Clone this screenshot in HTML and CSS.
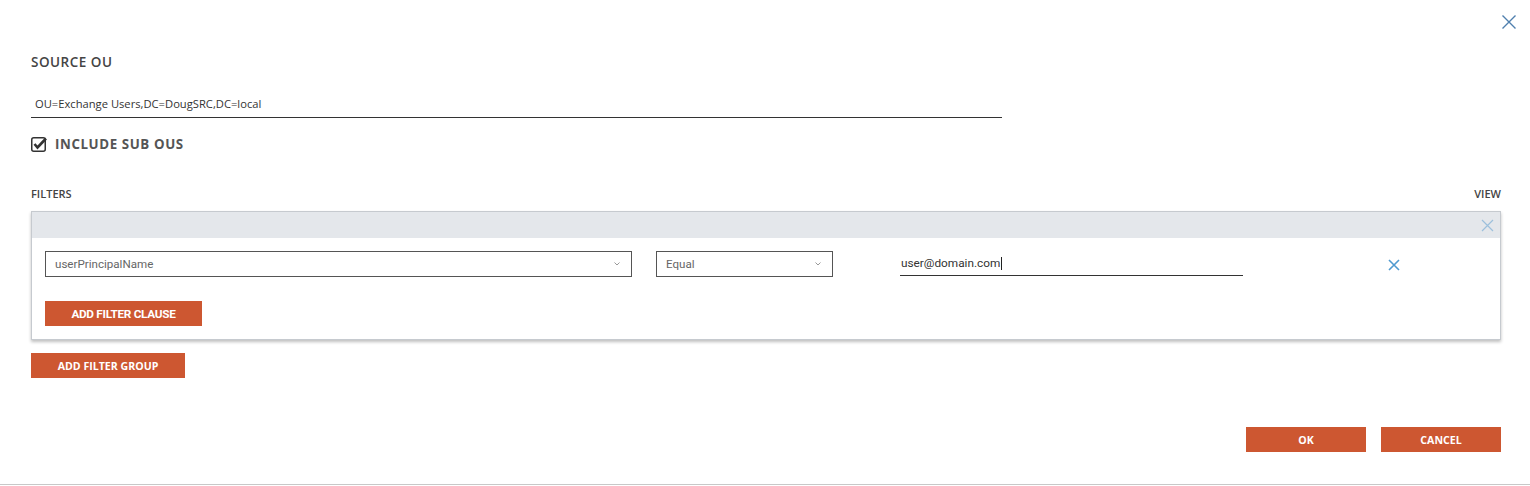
FILE: index.html
```html
<!DOCTYPE html>
<html lang="en">
<head>
    <meta charset="UTF-8">
    <title>Source OU</title>
    <link rel="stylesheet" href="styles.css">
</head>
<body>
    <div class="dialog">
        <div class="dialog-top">
            <button class="close-btn" aria-label="Close">
                <svg width="16" height="16" viewBox="0 0 16 16"><path d="M1.5 1.5 L14.5 14.5 M14.5 1.5 L1.5 14.5" stroke="#4f7fae" stroke-width="1.4" fill="none"/></svg>
            </button>
        </div>

        <h2 class="section-title">SOURCE OU</h2>
        <div class="text-field">OU=Exchange Users,DC=DougSRC,DC=local</div>

        <label class="check-row">
            <span class="check-box">
                <svg width="17" height="16" viewBox="0 0 17 16"><rect x="0.75" y="1.75" width="13.5" height="13.5" rx="2" fill="#fff" stroke="#333" stroke-width="1.5"/><path d="M3.5 8 L6.5 11.5 L15 2.5" stroke="#333" stroke-width="2.6" fill="none" stroke-linejoin="miter"/></svg>
            </span>
            <span class="check-label">INCLUDE SUB OUS</span>
        </label>

        <div class="filters-head">
            <span>FILTERS</span>
            <span>VIEW</span>
        </div>

        <div class="filter-group">
            <div class="group-header">
                <button class="group-close" aria-label="Remove group">
                    <svg width="13" height="13" viewBox="0 0 13 13"><path d="M1 1 L12 12 M12 1 L1 12" stroke="#9cc0dc" stroke-width="1.2" fill="none"/></svg>
                </button>
            </div>
            <div class="group-body">
                <div class="clause">
                    <div class="select select-attr">
                        <span>userPrincipalName</span>
                        <svg width="6" height="4" viewBox="0 0 6 4"><path d="M0.5 0.5 L3 3 L5.5 0.5" stroke="#999" stroke-width="1" fill="none"/></svg>
                    </div>
                    <div class="select select-op">
                        <span>Equal</span>
                        <svg width="6" height="4" viewBox="0 0 6 4"><path d="M0.5 0.5 L3 3 L5.5 0.5" stroke="#999" stroke-width="1" fill="none"/></svg>
                    </div>
                    <div class="value-field"><span>user@domain.com</span><span class="caret"></span></div>
                    <button class="clause-remove" aria-label="Remove clause">
                        <svg width="12" height="12" viewBox="0 0 12 12"><path d="M1 1 L11 11 M11 1 L1 11" stroke="#4f9ad0" stroke-width="1.6" fill="none"/></svg>
                    </button>
                </div>
                <button class="btn btn-clause">ADD FILTER CLAUSE</button>
            </div>
        </div>

        <button class="btn btn-group">ADD FILTER GROUP</button>

        <div class="dialog-actions">
            <button class="btn btn-action">OK</button>
            <button class="btn btn-action">CANCEL</button>
        </div>
    </div>
</body>
</html>
```

FILE: styles.css
```css
body {
    margin: 0;
    font-family: "Open Sans", sans-serif;
    color: #444;
    background-color: #fff;
}
.dialog {
    width: 1530px;
    height: 485px;
    box-sizing: border-box;
    padding: 0 29px 0 31px;
    border-bottom: 1px solid #c8c8c8;
    display: flex;
    flex-direction: column;
}
.dialog-top {
    display: flex;
    justify-content: flex-end;
    height: 44px;
    margin-right: -16px;
}
.close-btn {
    background: none;
    border: none;
    padding: 0;
    margin-top: 14px;
    width: 16px;
    height: 16px;
    cursor: pointer;
}
.section-title {
    margin: 9px 0 0;
    font-size: 13.5px;
    font-weight: 600;
    letter-spacing: 0.5px;
    color: #444;
    line-height: 18px;
}
.text-field {
    width: 971px;
    margin-top: 24px;
    padding: 0 4px 4px;
    box-sizing: border-box;
    border-bottom: 1px solid #333;
    font-size: 11.2px;
    line-height: 18px;
    color: #333;
}
.check-row {
    display: flex;
    align-items: center;
    margin-top: 18px;
    gap: 7px;
}
.check-box {
    display: flex;
}
.check-label {
    font-size: 13.3px;
    font-weight: 700;
    letter-spacing: 0.6px;
    color: #555;
    line-height: 16px;
}
.filters-head {
    display: flex;
    justify-content: space-between;
    margin-top: 35px;
    font-size: 11px;
    font-weight: 600;
    color: #444;
    line-height: 14px;
}
.filter-group {
    margin-top: 10px;
    border: 1px solid #c6cacf;
    box-shadow: 0 2px 3px rgba(0, 0, 0, 0.25);
}
.group-header {
    height: 26px;
    background-color: #e4e7eb;
    display: flex;
    justify-content: flex-end;
    align-items: center;
    padding-right: 6px;
}
.group-close {
    background: none;
    border: none;
    padding: 0;
    width: 13px;
    height: 13px;
    display: flex;
    cursor: pointer;
}
.group-body {
    padding: 13px 13px 13px;
}
.clause {
    display: flex;
    align-items: flex-start;
}
.select {
    height: 26px;
    box-sizing: border-box;
    border: 1px solid #555;
    display: flex;
    align-items: center;
    justify-content: space-between;
    padding: 0 11px 0 9px;
    font-family: "Roboto", sans-serif;
    font-size: 11.6px;
    color: #666;
}
.select-attr {
    width: 587px;
}
.select-op {
    width: 177px;
    margin-left: 24px;
}
.value-field {
    width: 343px;
    height: 25px;
    margin-left: 67px;
    box-sizing: border-box;
    border-bottom: 1px solid #333;
    font-family: "Roboto", sans-serif;
    font-size: 11.8px;
    color: #333;
    display: flex;
    align-items: center;
    padding-left: 1px;
}
.caret {
    display: inline-block;
    width: 1px;
    height: 13px;
    background-color: #222;
    margin-left: 1px;
}
.clause-remove {
    background: none;
    border: none;
    padding: 0;
    margin-left: 145px;
    margin-top: 8px;
    width: 12px;
    height: 12px;
    display: flex;
    cursor: pointer;
}
.btn {
    background-color: #cd5731;
    color: #fff;
    border: none;
    height: 25px;
    font-family: "Open Sans", sans-serif;
    font-size: 10.6px;
    font-weight: 700;
    cursor: pointer;
    padding: 0;
}
.btn-clause {
    width: 157px;
    margin-top: 24px;
    font-family: "Roboto", sans-serif;
    font-size: 11.8px;
    font-weight: 700;
    letter-spacing: -0.3px;
}
.btn-group {
    width: 154px;
    margin-top: 13px;
}
.dialog-actions {
    display: flex;
    justify-content: flex-end;
    gap: 15px;
    margin-top: 49px;
}
.btn-action {
    width: 120px;
}
```
